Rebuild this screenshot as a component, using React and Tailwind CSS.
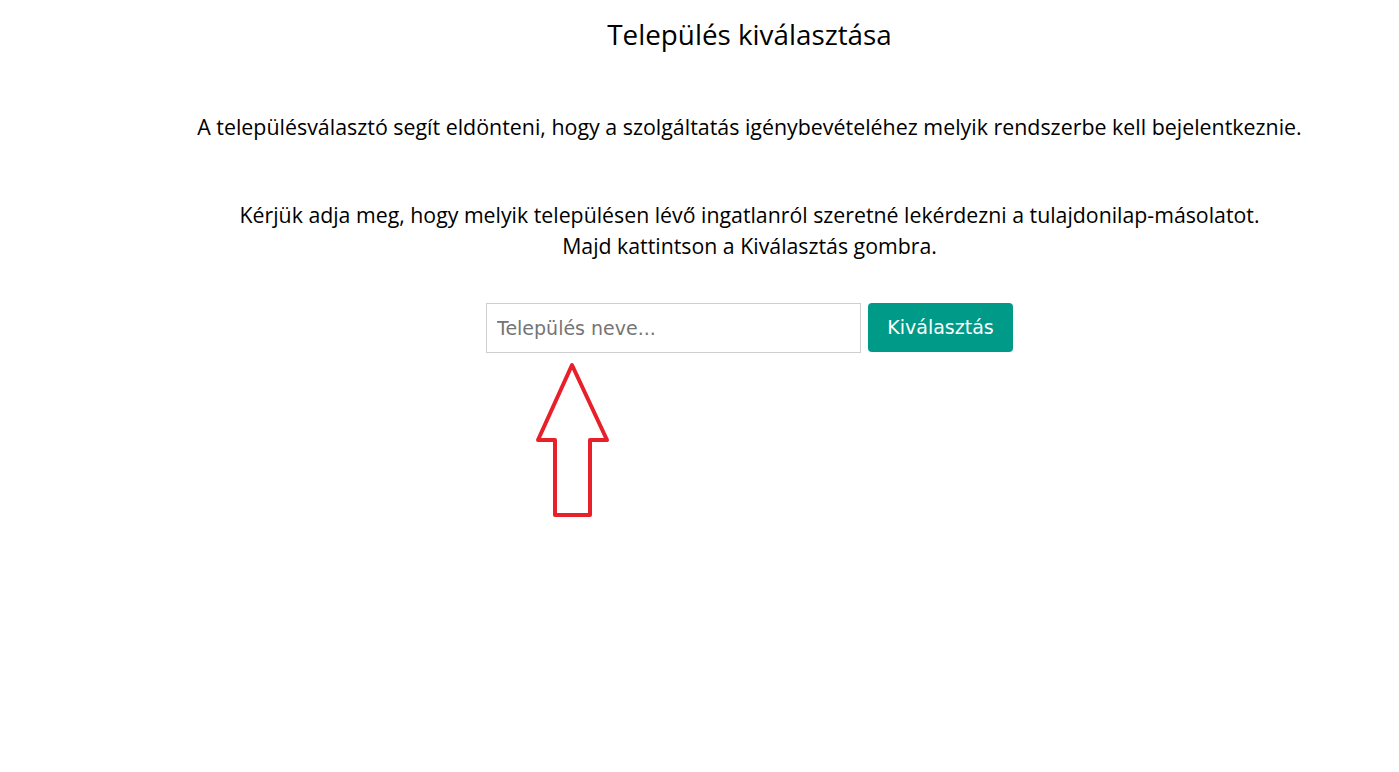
export default function App() {
  return (
    <div className="min-h-screen bg-white text-black">
      <div className="ml-[100px] flex flex-col items-center pt-[14px] font-['Open_Sans',sans-serif]">
        <h1 className="text-[27.8px] leading-[40px] font-normal">Település kiválasztása</h1>

        <p className="mt-[58px] text-[21.4px] leading-[30px] whitespace-nowrap">
          A településválasztó segít eldönteni, hogy a szolgáltatás igénybevételéhez melyik rendszerbe kell bejelentkeznie.
        </p>

        <div className="mt-[57px] text-center text-[21.3px] leading-[31px] whitespace-nowrap">
          <p>Kérjük adja meg, hogy melyik településen lévő ingatlanról szeretné lekérdezni a tulajdonilap-másolatot.</p>
          <p>Majd kattintson a Kiválasztás gombra.</p>
        </div>

        <div className="mt-[42px] flex items-start gap-[7px]">
          <input
            type="text"
            placeholder="Település neve..."
            className="h-[50px] w-[375px] border border-[#cfcfcf] px-[10px] font-[family-name:DejaVu_Sans,Verdana,sans-serif] text-[19px] text-[#333] placeholder:text-[#757575] outline-none"
          />
          <button className="h-[49px] w-[145px] rounded-[4px] bg-[#009a89] font-[family-name:DejaVu_Sans,Verdana,sans-serif] text-[19px] text-white">
            Kiválasztás
          </button>
        </div>

        <div className="mr-[353px] mt-[8px]">
          <svg width="76" height="156" viewBox="0 0 76 156">
            <path
              d="M37 4 L72 79 L55 79 L55 154 L20 154 L20 79 L3 79 Z"
              fill="none"
              stroke="#e8202a"
              strokeWidth="4"
              strokeLinejoin="round"
            />
          </svg>
        </div>
      </div>
    </div>
  );
}
